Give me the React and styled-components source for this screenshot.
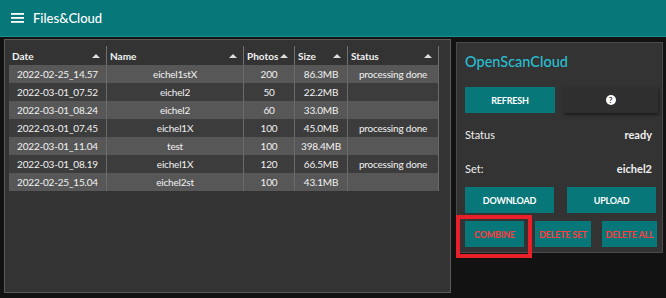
import React from 'react';
import styled, { createGlobalStyle } from 'styled-components';

const Global = createGlobalStyle`
  body {
    margin: 0;
    background: #121212;
    font-family: Lato, "Open Sans", sans-serif;
  }
`;

const Page = styled.div`
  width: 666px;
  height: 298px;
  overflow: hidden;
`;

const TopBar = styled.header`
  height: 36px;
  background: #08777a;
  border-bottom: 1px solid #1c9195;
  display: flex;
  align-items: center;
  padding-left: 11px;
  gap: 8px;
  color: #fff;
`;

const Title = styled.span`
  font-size: 13px;
  font-weight: 500;
`;

const Main = styled.div`
  display: flex;
  align-items: flex-start;
  padding: 2px 3px 0 4px;
  gap: 5px;
`;

const FilePanel = styled.div`
  width: 444px;
  height: 246px;
  background: #333;
  border: 1px solid #5a5a5a;
  padding: 6px 0 0 4px;
  box-sizing: content-box;
`;

const Table = styled.div`
  width: 430px;
  font-size: 10px;
  letter-spacing: -0.2px;
  color: #f2f2f2;
`;

const cols = '98px 137px 51px 53px 91px';

const HeadRow = styled.div`
  display: grid;
  grid-template-columns: ${cols} 3px;
  height: 19px;
  align-items: center;
`;

const HeadCell = styled.div`
  display: flex;
  align-items: center;
  justify-content: space-between;
  height: 100%;
  padding: 0 6px 0 3px;
  font-size: 10px;
  font-weight: 700;
  letter-spacing: 0;
  border-right: 1px solid #707070;
  box-sizing: border-box;
`;

const Arrow = styled.span`
  width: 0;
  height: 0;
  border-left: 4px solid transparent;
  border-right: 4px solid transparent;
  border-bottom: 4px solid #ddd;
`;

const Row = styled.div`
  display: grid;
  grid-template-columns: ${cols};
  height: 18px;
  align-items: center;
  background: ${p => (p.$odd ? '#575757' : '#3c3c3c')};
`;

const Cell = styled.div`
  text-align: center;
  height: 100%;
  line-height: 18px;
  border-right: 1px solid #6a6a6a;
  box-sizing: border-box;
  white-space: nowrap;
`;

const CloudPanel = styled.div`
  position: relative;
  margin-top: 3px;
  width: 207px;
  height: 211px;
  background: #333;
  border: 1px solid #4a4a4a;
  box-sizing: border-box;
  padding: 9px 6px 0 8px;
  color: #f0f0f0;
`;

const CloudTitle = styled.div`
  color: #29bfd2;
  font-size: 14.5px;
  font-weight: 500;
  height: 25px;
  line-height: 20px;
`;

const ButtonRow = styled.div`
  display: grid;
  grid-template-columns: ${p => p.$cols};
  gap: ${p => p.$gap}px;
  margin-top: ${p => p.$top}px;
`;

const Btn = styled.div`
  height: 26px;
  background: ${p => (p.$dark ? '#2f2f2f' : '#08777a')};
  box-shadow: ${p => (p.$dark ? '1px 2px 3px rgba(0,0,0,0.45)' : 'none')};
  color: ${p => (p.$danger ? '#ff3b3b' : '#fff')};
  font-size: 9px;
  letter-spacing: -0.2px;
  font-weight: 700;
  display: flex;
  align-items: center;
  justify-content: center;
  white-space: nowrap;
`;

const InfoRow = styled.div`
  display: flex;
  justify-content: space-between;
  font-size: 11px;
  height: ${p => p.$h}px;
  margin-top: ${p => p.$top || 0}px;
  line-height: 18px;
  padding-right: 4px;
`;

const Strong = styled.span`
  font-weight: 700;
`;

const Help = styled.span`
  width: 10px;
  height: 10px;
  border-radius: 50%;
  background: #fff;
  color: #2f2f2f;
  font-size: 8px;
  font-weight: 700;
  display: flex;
  align-items: center;
  justify-content: center;
`;

const Highlight = styled.div`
  position: absolute;
  left: -1px;
  top: 172px;
  width: 76px;
  height: 43px;
  border: 4px solid #e8202a;
  box-sizing: border-box;
`;

const files = [
  ['2022-02-25_14.57', 'eichel1stX', '200', '86.3MB', 'processing done'],
  ['2022-03-01_07.52', 'eichel2', '50', '22.2MB', ''],
  ['2022-03-01_08.24', 'eichel2', '60', '33.0MB', ''],
  ['2022-03-01_07.45', 'eichel1X', '100', '45.0MB', 'processing done'],
  ['2022-03-01_11.04', 'test', '100', '398.4MB', ''],
  ['2022-03-01_08.19', 'eichel1X', '120', '66.5MB', 'processing done'],
  ['2022-02-25_15.04', 'eichel2st', '100', '43.1MB', ''],
];

function Menu() {
  return (
    <svg width="14" height="12" viewBox="0 0 14 12">
      <rect x="0" y="1" width="13" height="1.8" fill="#fff" />
      <rect x="0" y="5" width="13" height="1.8" fill="#fff" />
      <rect x="0" y="9" width="13" height="1.8" fill="#fff" />
    </svg>
  );
}

export default function App() {
  return (
    <Page>
      <Global />
      <TopBar>
        <Menu />
        <Title>Files&amp;Cloud</Title>
      </TopBar>
      <Main>
        <FilePanel>
          <Table>
            <HeadRow>
              {['Date', 'Name', 'Photos', 'Size', 'Status'].map(h => (
                <HeadCell key={h}>
                  {h}
                  <Arrow />
                </HeadCell>
              ))}
            </HeadRow>
            {files.map((f, i) => (
              <Row key={i} $odd={i % 2 === 0}>
                {f.map((v, j) => (
                  <Cell key={j}>{v}</Cell>
                ))}
              </Row>
            ))}
          </Table>
        </FilePanel>
        <CloudPanel>
          <CloudTitle>OpenScanCloud</CloudTitle>
          <ButtonRow $cols="90px 95px" $gap={8} $top={10}>
            <Btn>REFRESH</Btn>
            <Btn $dark>
              <Help>?</Help>
            </Btn>
          </ButtonRow>
          <InfoRow $h={34} $top={13}>
            <span>Status</span>
            <Strong>ready</Strong>
          </InfoRow>
          <InfoRow $h={27}>
            <span>Set:</span>
            <Strong>eichel2</Strong>
          </InfoRow>
          <ButtonRow $cols="89px 89px" $gap={13} $top={0}>
            <Btn>DOWNLOAD</Btn>
            <Btn>UPLOAD</Btn>
          </ButtonRow>
          <ButtonRow $cols="59px 56px 55px" $gap={11} $top={8}>
            <Btn $danger>COMBINE</Btn>
            <Btn $danger>DELETE SET</Btn>
            <Btn $danger>DELETE ALL</Btn>
          </ButtonRow>
          <Highlight />
        </CloudPanel>
      </Main>
    </Page>
  );
}
